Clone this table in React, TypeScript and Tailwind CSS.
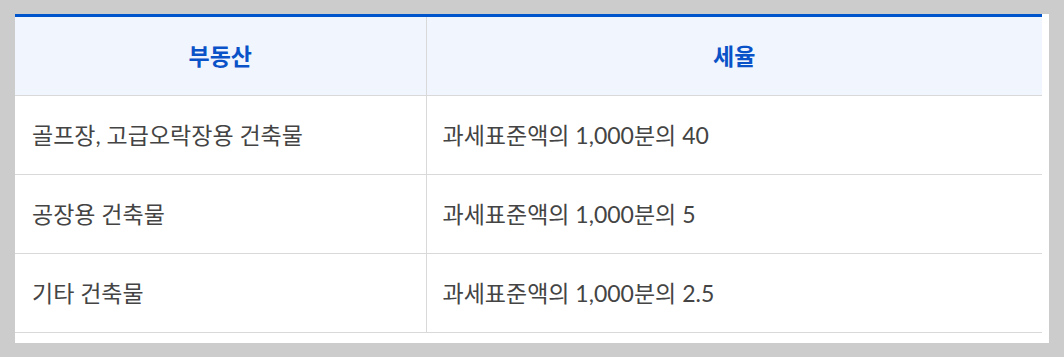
const rows = [
  { name: '골프장, 고급오락장용 건축물', rate: '과세표준액의 1,000분의 40' },
  { name: '공장용 건축물', rate: '과세표준액의 1,000분의 5' },
  { name: '기타 건축물', rate: '과세표준액의 1,000분의 2.5' },
]

export default function App() {
  return (
    <div
      className="min-h-[357px] bg-[#cccccc] pt-[14px] pl-[15px] pr-[15px]"
      style={{ fontFamily: 'Lato, "Noto Sans CJK KR", sans-serif' }}
    >
      <div className="bg-white pr-[7px] pb-[10px]">
        <table className="w-full border-collapse border-t-[3px] border-[#0055cc] table-fixed">
          <colgroup>
            <col className="w-[411px]" />
            <col />
          </colgroup>
          <thead>
            <tr className="bg-[#f1f5fd] h-[80px]">
              <th className="border-b border-r border-[#d9d9d9] text-[23px] font-bold text-[#0a52c8] text-center">
                부동산
              </th>
              <th className="border-b border-[#d9d9d9] text-[23px] font-bold text-[#0a52c8] text-center">
                세율
              </th>
            </tr>
          </thead>
          <tbody>
            {rows.map((r) => (
              <tr key={r.name} className="h-[79px]">
                <td className="border-b border-r border-[#d9d9d9] pl-[17px] text-[23px] text-[#444444]">
                  {r.name}
                </td>
                <td className="border-b border-[#d9d9d9] pl-[16px] text-[23px] text-[#444444]">
                  {r.rate}
                </td>
              </tr>
            ))}
          </tbody>
        </table>
      </div>
    </div>
  )
}
